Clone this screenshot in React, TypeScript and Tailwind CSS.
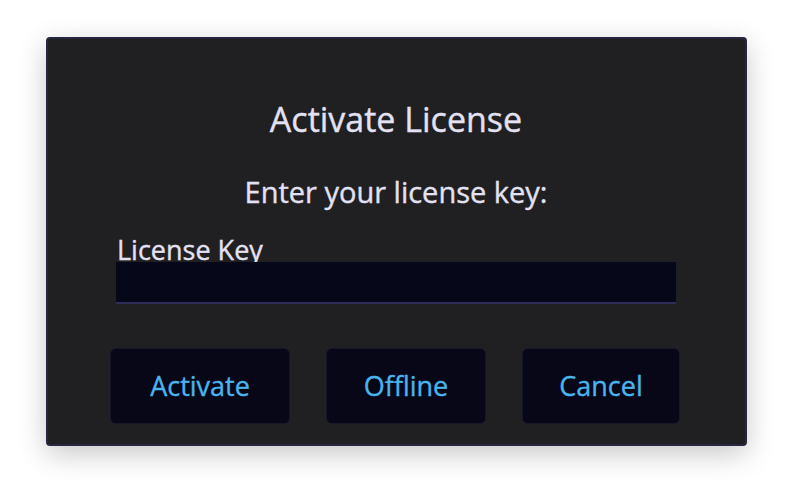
export default function App() {
  const font = { fontFamily: '"Open Sans", "Noto Sans", sans-serif' };
  const buttons = [
    { label: "Activate", w: "w-[180px]" },
    { label: "Offline", w: "w-[160px]" },
    { label: "Cancel", w: "w-[158px]" },
  ];
  return (
    <div className="w-[792px] h-[500px] bg-white flex justify-center pt-[37px]" style={font}>
      <div className="w-[701px] h-[409px] rounded-[4px] border-2 border-[#26263f] bg-[#202022] shadow-[0_8px_28px_rgba(0,0,0,0.22)] flex flex-col items-center pt-[60px] [-webkit-text-stroke:0.35px_currentColor]">
        <h1 className="text-[34px] leading-[40px] text-[#e4e2f2]">Activate License</h1>
        <p className="mt-[35px] text-[29px] leading-[36px] text-[#e4e2f2]">Enter your license key:</p>
        <div className="mt-[27px] w-[560px] flex flex-col">
          <label className="pl-px text-[27px] leading-[25px] text-[#e4e2f2]">License Key</label>
          <input className="h-[42px] w-full bg-[#07071a] border-b-2 border-[#2f2c55] outline-none text-[#e4e2f2] px-2" />
        </div>
        <div className="mt-[44px] -ml-[2px] flex gap-[36px]">
          {buttons.map((b) => (
            <button
              key={b.label}
              className={`${b.w} h-[76px] rounded-[6px] border border-[#17172b] bg-[#070718] text-[27px] text-[#4ab4ec]`}
            >
              {b.label}
            </button>
          ))}
        </div>
      </div>
    </div>
  );
}
